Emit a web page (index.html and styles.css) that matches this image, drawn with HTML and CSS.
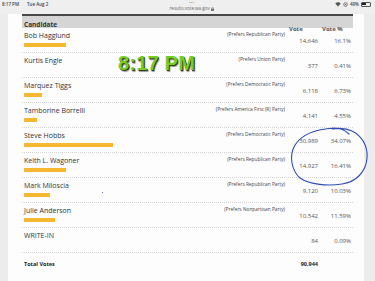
FILE: index.html
```html
<!DOCTYPE html>
<html>
<head>
<meta charset="utf-8">
<link rel="stylesheet" href="styles.css">
</head>
<body>
<div class="status">
  <div class="st-left"><span>8:17 PM</span><span class="st-date">Tue Aug 2</span></div>
  <div class="st-mid">
    <div class="dots">•••</div>
    <div class="url">results.vote.wa.gov <svg width="3" height="4" viewBox="0 0 3 4"><rect x="0" y="1.6" width="3" height="2.4" fill="#777"/><path d="M0.7 1.8V1.1a0.8 0.8 0 0 1 1.6 0v0.7" fill="none" stroke="#777" stroke-width="0.5"/></svg></div>
  </div>
  <div class="st-right">
    <svg width="6" height="5" viewBox="0 0 6 5"><path d="M3 4.6 0.2 1.6a4 4 0 0 1 5.6 0z" fill="#555"/></svg>
    <svg width="5" height="5" viewBox="0 0 5 5"><circle cx="2.5" cy="2.5" r="1.8" fill="none" stroke="#555" stroke-width="0.8"/><circle cx="2.5" cy="2.5" r="0.6" fill="#555"/></svg>
    <span>49%</span>
    <span class="batt"><span class="batt-fill"></span></span>
  </div>
</div>
<div class="page">
  <div class="table">
    <div class="row head">
      <div class="c-name">Candidate</div>
      <div class="c-vote">Vote</div>
      <div class="c-pct">Vote %</div>
    </div>

    <div class="row">
      <div class="c-name"><div class="line"><span class="nm">Bob Hagglund</span><span class="party">(Prefers Republican Party)</span></div><div class="bar" style="width:42px"></div></div>
      <div class="c-vote">14,646</div><div class="c-pct">16.1%</div>
    </div>
    <div class="row">
      <div class="c-name"><div class="line"><span class="nm">Kurtis Engle</span><span class="party">(Prefers Union Party)</span></div></div>
      <div class="c-vote">377</div><div class="c-pct">0.41%</div>
    </div>
    <div class="row">
      <div class="c-name"><div class="line"><span class="nm">Marquez Tiggs</span><span class="party">(Prefers Democratic Party)</span></div><div class="bar" style="width:18px"></div></div>
      <div class="c-vote">6,118</div><div class="c-pct">6.73%</div>
    </div>
    <div class="row">
      <div class="c-name"><div class="line"><span class="nm">Tamborine Borrelli</span><span class="party">(Prefers America First (R) Party)</span></div><div class="bar" style="width:13px"></div></div>
      <div class="c-vote">4,141</div><div class="c-pct">4.55%</div>
    </div>
    <div class="row">
      <div class="c-name"><div class="line"><span class="nm">Steve Hobbs</span><span class="party">(Prefers Democratic Party)</span></div><div class="bar" style="width:89px"></div></div>
      <div class="c-vote">30,989</div><div class="c-pct">34.07%</div>
    </div>
    <div class="row">
      <div class="c-name"><div class="line"><span class="nm">Keith L. Wagoner</span><span class="party">(Prefers Republican Party)</span></div><div class="bar" style="width:42px"></div></div>
      <div class="c-vote">14,927</div><div class="c-pct">16.41%</div>
    </div>
    <div class="row">
      <div class="c-name"><div class="line"><span class="nm">Mark Miloscia</span><span class="party">(Prefers Republican Party)</span></div><div class="bar" style="width:26px"></div></div>
      <div class="c-vote">9,120</div><div class="c-pct">10.03%</div>
    </div>
    <div class="row">
      <div class="c-name"><div class="line"><span class="nm">Julie Anderson</span><span class="party">(Prefers Nonpartisan Party)</span></div><div class="bar" style="width:31px"></div></div>
      <div class="c-vote">10,542</div><div class="c-pct">11.59%</div>
    </div>
    <div class="row">
      <div class="c-name"><div class="line"><span class="nm">WRITE-IN</span></div></div>
      <div class="c-vote">84</div><div class="c-pct">0.09%</div>
    </div>
    <div class="row total">
      <div class="c-name">Total Votes</div>
      <div class="c-vote">90,944</div><div class="c-pct"></div>
    </div>
  </div>
</div>

<div class="stamp">8:17 PM</div>
<svg class="circle" width="375" height="281" viewBox="0 0 375 281">
  <path d="M349 134 C345 130 340 128 334 128 C318 129 302 134 295 145 C289 155 291 170 300 178 C310 185 328 186 342 184 C356 182 366 172 367 158 C368 146 362 136 352 131 C346 128 338 128 332 129" fill="none" stroke="#2f4db5" stroke-width="1.1" stroke-linecap="round"/>
</svg>
<span class="dot"></span>
</body>
</html>
```
FILE: styles.css
```css
* { box-sizing: border-box; }
html, body { margin: 0; padding: 0; }
body {
  width: 375px;
  height: 281px;
  overflow: hidden;
  background: #ececec;
  font-family: "Open Sans", "Liberation Sans", sans-serif;
  color: #333;
  position: relative;
}
.status {
  height: 14px;
  background: #efefef;
  display: flex;
  justify-content: space-between;
  align-items: flex-start;
  padding: 0 4px 0 2px;
  font-size: 4.5px;
  color: #444;
}
.st-left { display: flex; gap: 8px; line-height: 8px; font-weight: 600; }
.st-mid { text-align: center; line-height: 5px; padding-top: 1px; color: #666; }
.dots { font-size: 3px; letter-spacing: 0.5px; line-height: 5px; }
.url { display: flex; align-items: center; gap: 1px; }
.st-right { display: flex; align-items: center; gap: 2px; height: 8px; font-weight: 600; }
.batt { width: 10px; height: 5px; border: 0.6px solid #555; border-radius: 1px; padding: 0.5px; display: flex; }
.batt-fill { width: 50%; background: #222; }
.page {
  margin-left: 8px;
  width: 356px;
  height: 267px;
  background: #fdfdfd;
  padding-left: 14px;
}
.table {
  width: 331px;
  border-top: 2px solid #484848;
}
.row {
  display: grid;
  grid-template-columns: 1fr 33px 33px;
  height: 25px;
  border-bottom: 1px dotted #d4d4d4;
}
.row.head {
  height: 12px;
  background: #d5d5d5;
  border-bottom: none;
  font-weight: 700;
  font-size: 6.5px;
  line-height: 12px;
  color: #333;
}
.row.head .c-name { padding-left: 2px; }
.row.head .c-vote, .row.head .c-pct { padding-left: 2px; text-align: left; }
.c-name { padding: 3px 2px 0 2px; min-width: 0; }
.line { display: flex; justify-content: space-between; align-items: flex-start; }
.nm { font-size: 7px; line-height: 10px; color: #333; }
.party { font-size: 4.8px; line-height: 6px; color: #444; white-space: nowrap; }
.bar { height: 4px; margin-top: 2px; background: #f6b732; }
.c-vote, .c-pct {
  text-align: right;
  padding: 8px 2px 0 0;
  font-size: 6px;
  line-height: 10px;
  color: #555;
}
.row.total { border-bottom: none; height: 28px; }
.row.total .c-name, .row.total .c-vote {
  font-weight: 700;
  font-size: 5.5px;
  line-height: 10px;
  padding-top: 6px;
  color: #222;
}
.stamp {
  position: absolute;
  left: 118px;
  top: 53px;
  font-family: "Liberation Sans", Arial, sans-serif;
  font-weight: 700;
  font-size: 20px;
  line-height: 20px;
  color: #72cf22;
  text-shadow: 1px 1px 0 #3a3a1a, 1.5px 1.5px 1px rgba(0,0,0,0.4);
  letter-spacing: 0.2px;
}
.circle { position: absolute; left: 0; top: 0; pointer-events: none; }
.dot { position: absolute; left: 102px; top: 192px; width: 1px; height: 1px; background: #5a6fc0; }
```
